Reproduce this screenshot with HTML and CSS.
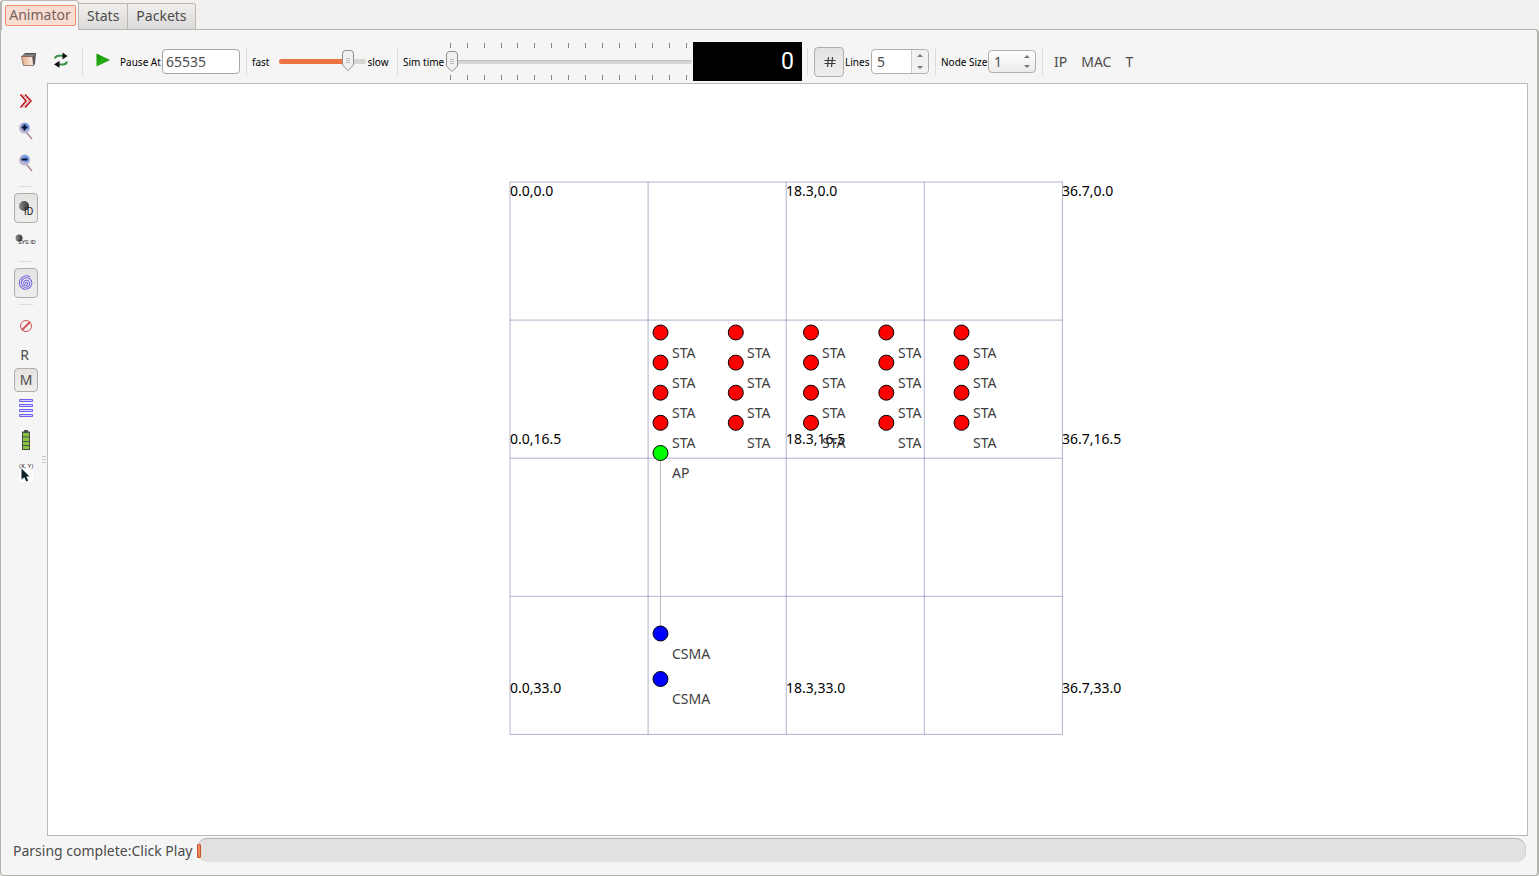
FILE: index.html
```html
<!DOCTYPE html>
<html lang="en">
<head>
<meta charset="utf-8">
<title>Animator</title>
<link rel="stylesheet" href="styles.css">
</head>
<body>
<nav class="tabs" role="tablist">
  <button class="tab tab-active" role="tab" aria-selected="true"><span>Animator</span></button>
  <button class="tab" role="tab">Stats</button>
  <button class="tab" role="tab">Packets</button>
</nav>
<main class="panel">
  <div class="toolbar">
    <div class="group group-file">
      <button class="tool" aria-label="Open">
        <svg width="16" height="16" viewBox="0 0 16 16"><defs><linearGradient id="fold" x2="1"><stop stop-color="#e8ab86"/><stop offset="1" stop-color="#fbeee4"/></linearGradient></defs><path d="M1 4l3-3h11l-1 11-2 2z" fill="#55555a"/><path d="M2 2.500h12l-2 2H1z" fill="#8b8c92"/><path d="M.5 4.500h11l1 9H2.500z" fill="url(#fold)" stroke="#70554a" stroke-width=".7"/></svg>
      </button>
      <button class="tool" aria-label="Reload">
        <svg width="16" height="16" viewBox="0 0 16 16" fill="none"><path d="M2 6.500Q2.500 4 6 3.800H11" stroke="#369347" stroke-width="2"/><path d="M9.500.5L14.500 4 9.500 7.500z" fill="#111"/><path d="M14 9.500q-.5 2.800-4 2.900H6" stroke="#369347" stroke-width="2"/><path d="M6.500 8.800L1 12.400l5.500 3.300z" fill="#111"/></svg>
      </button>
    </div>
    <div class="group group-play">
      <button class="tool tool-play" aria-label="Play">
        <svg width="14" height="14" viewBox="0 0 14 14"><defs><linearGradient id="play" x2="1" y2="1"><stop stop-color="#0a8a08"/><stop offset=".5" stop-color="#27ae12"/><stop offset="1" stop-color="#087506"/></linearGradient></defs><path d="M.5.5L14 7 .5 13.500z" fill="url(#play)"/></svg>
      </button>
      <label class="small" for="pause">Pause At</label>
      <input class="field" id="pause" type="text" value="65535">
    </div>
    <div class="group group-speed">
      <label class="small" for="speed">fast</label>
      <input class="slider slider-speed" id="speed" type="range" min="0" max="100" value="84">
      <span class="small">slow</span>
    </div>
    <div class="group group-time">
      <label class="small" for="time">Sim time</label>
      <div class="timeline">
        <svg class="ticks" width="237" height="5" viewBox="0 0 237 5"><path id="ticks" d="M.5 0v5M17.500 0v5M34.500 0v5M51.500 0v5M67.500 0v5M84.500 0v5M101.500 0v5M118.500 0v5M135.500 0v5M152.500 0v5M169.500 0v5M185.500 0v5M202.500 0v5M219.500 0v5M236.500 0v5" stroke="#858585"/></svg>
        <input class="slider slider-time" id="time" type="range" min="0" max="100" value="0">
        <svg class="ticks" width="237" height="5" viewBox="0 0 237 5"><use href="#ticks"/></svg>
      </div>
      <output class="lcd" for="time">0</output>
    </div>
    <div class="group group-grid">
      <button class="tool-grid" aria-label="Grid" aria-pressed="true">
        <svg width="12" height="12" viewBox="0 0 12 12" stroke="#3c3c3c" stroke-width="1.200"><path d="M4.500 1L3.500 11M8.500 1L7.500 11M.5 4.500h11M.5 7.500h11"/></svg>
      </button>
      <label class="small" for="lines">Lines</label>
      <div class="spin spin-lines">
        <input id="lines" type="number" value="5">
        <div class="steps"><button aria-label="More lines"><i class="up"></i></button><button aria-label="Fewer lines"><i class="down"></i></button></div>
      </div>
    </div>
    <div class="group group-size">
      <label class="small" for="size">Node Size</label>
      <div class="spin spin-size">
        <input id="size" type="number" value="1">
        <div class="steps"><button aria-label="Larger"><i class="up"></i></button><button aria-label="Smaller"><i class="down"></i></button></div>
      </div>
    </div>
    <div class="group group-show">
      <button class="word">IP</button>
      <button class="word">MAC</button>
      <button class="word">T</button>
    </div>
  </div>
  <div class="work">
    <aside class="rail">
      <button class="rail-item" aria-label="More tools"><svg width="14" height="14" viewBox="0 0 14 14" fill="none" stroke="#bd1115" stroke-width="1.500"><path d="M1.500.5L7 7l-5.500 6.500M6 .5L12 7l-6 6.500"/><path d="M3.500.5L9.500 7l-5.500 6.500" stroke="#d98080" stroke-width=".8"/></svg></button>
      <button class="rail-item" aria-label="Zoom in"><svg width="16" height="18" viewBox="0 0 16 18"><defs><radialGradient id="lens" cx=".6" cy=".35"><stop stop-color="#4f84e0"/><stop offset=".6" stop-color="#86a5e2"/><stop offset="1" stop-color="#c3b6d3"/></radialGradient></defs><path d="M8.500 10.500L14 17" stroke="#a88a98" stroke-width="1.500"/><circle cx="6.500" cy="6" r="5.500" fill="url(#lens)"/><path d="M3.500 5.500h6M6.500 2.500v6" stroke="#071331" stroke-width="2"/></svg></button>
      <button class="rail-item rail-tall" aria-label="Zoom out"><svg width="16" height="18" viewBox="0 0 16 18"><path d="M8.500 10.500L14 17" stroke="#a88a98" stroke-width="1.500"/><circle cx="6.500" cy="6" r="5.500" fill="url(#lens)"/><path d="M3.500 5.500h6" stroke="#071331" stroke-width="2"/></svg></button>
      <hr>
      <button class="rail-item pressed" aria-label="Node ID" aria-pressed="true"><svg width="16" height="16" viewBox="0 0 16 16"><defs><linearGradient id="ball"><stop stop-color="#8c8c8c"/><stop offset="1" stop-color="#333"/></linearGradient></defs><circle cx="6" cy="6" r="5" fill="url(#ball)"/><text class="tag" x="6" y="15">ID</text></svg></button>
      <button class="rail-item rail-mid" aria-label="System ID"><svg width="22" height="16" viewBox="0 0 22 16"><circle cx="4" cy="7" r="3.500" fill="url(#ball)"/><text class="tag tag-small" x="3" y="13">SYS ID</text></svg></button>
      <hr>
      <button class="rail-item pressed" aria-label="Wireless circles" aria-pressed="true"><svg width="16" height="16" viewBox="0 0 16 16" fill="none" stroke="#7769e3" stroke-width="1.100"><path d="M8 8.500c-1-1 1-2 1.500-.3.500 2-2.500 3-3.500 1C5 6.500 7 5 9 5.300c3 .7 3.300 4.200 1.500 6-2.500 2-6.500.7-7-2.600C3 5 6 2.500 9 2.800c4 .5 5.500 4 4.500 7-1.200 4-5.500 5.500-9 3.700C1 11.500.5 7 2.500 4 4.500.8 9-.2 12 2"/></svg></button>
      <hr>
      <button class="rail-item" aria-label="Block packets"><svg width="14" height="14" viewBox="0 0 14 14" fill="none" stroke="#cf5353"><circle cx="7" cy="7" r="5.500"/><path d="M3 11l8-8" stroke-width="2"/></svg></button>
      <button class="rail-item rail-r">R</button>
      <button class="rail-item rail-m pressed" aria-pressed="true">M</button>
      <button class="rail-item rail-mid" aria-label="Packet list"><svg width="14" height="18" viewBox="0 0 14 18" fill="#d6d2fb" stroke="#6f61ef"><path d="M.5.5h13v2H.5zM.5 5.500h13v2H.5zM.5 10.500h13v2H.5zM.5 15.500h13v2H.5z"/></svg></button>
      <button class="rail-item rail-mid" aria-label="Battery"><svg width="10" height="20" viewBox="0 0 10 20"><path d="M3 0h4v2H3zM1 1.500h8V20H1z" fill="#4a5050"/><path d="M2 3h6v3.500H2zM2 7.500h6V11H2zM2 12h6v3H2zM2 16h6v3H2z" fill="#88c43b"/></svg></button>
      <button class="rail-item rail-mid" aria-label="Show coordinates"><svg width="18" height="22" viewBox="0 0 18 22"><path d="M2 4h14v17H2z" fill="#fff"/><text class="tag tag-small" x="2" y="7">(X, Y)</text><path d="M4.500 7.500v11l2.800-2.300 1.900 4.300 2-1-2-4h3.300z" fill="#0b2027"/></svg></button>
    </aside>
    <div class="grip"><i></i><i></i><i></i></div>
    <section class="canvas">
      <svg class="scene" width="555" height="555" viewBox="0 0 555 555">
        <defs>
          <g id="row"><circle cx="150.500" cy="0" r="7.500"/><circle cx="225.800" cy="0" r="7.500"/><circle cx="301" cy="0" r="7.500"/><circle cx="376.300" cy="0" r="7.500"/><circle cx="451.500" cy="0" r="7.500"/></g>
        </defs>
        <path class="mesh" d="M0 0h552.500M0 138.100h552.500M0 276.200h552.500M0 414.300h552.500M0 552.400h552.500M0 0v552.500M138.100 0v552.500M276.200 0v552.500M414.300 0v552.500M552.400 0v552.500"/>
        <path class="link" d="M150.500 271v180"/>
        <g class="sta"><use href="#row" y="150.500"/><use href="#row" y="180.600"/><use href="#row" y="210.700"/><use href="#row" y="240.800"/></g>
        <circle class="ap" cx="150.500" cy="271" r="7.500"/>
        <circle class="csma" cx="150.500" cy="451.500" r="7.500"/>
        <circle class="csma" cx="150.500" cy="497" r="7.500"/>
        <g class="names">
          <text x="162" y="176">STA</text><text x="237" y="176">STA</text><text x="312" y="176">STA</text><text x="388" y="176">STA</text><text x="463" y="176">STA</text>
          <text x="162" y="206">STA</text><text x="237" y="206">STA</text><text x="312" y="206">STA</text><text x="388" y="206">STA</text><text x="463" y="206">STA</text>
          <text x="162" y="236">STA</text><text x="237" y="236">STA</text><text x="312" y="236">STA</text><text x="388" y="236">STA</text><text x="463" y="236">STA</text>
          <text x="162" y="266">STA</text><text x="237" y="266">STA</text><text x="312" y="266">STA</text><text x="388" y="266">STA</text><text x="463" y="266">STA</text>
          <text x="162" y="296">AP</text><text x="162" y="477">CSMA</text><text x="162" y="522">CSMA</text>
        </g>
        <g class="coords">
          <text x="0" y="14">0.0,0.0</text><text x="276" y="14">18.3,0.0</text><text x="552" y="14">36.7,0.0</text>
          <text x="0" y="262">0.0,16.5</text><text x="276" y="262">18.3,16.5</text><text x="552" y="262">36.7,16.5</text>
          <text x="0" y="511">0.0,33.0</text><text x="276" y="511">18.3,33.0</text><text x="552" y="511">36.7,33.0</text>
        </g>
      </svg>
    </section>
  </div>
  <footer class="status">
    <span class="message">Parsing complete:Click Play</span>
    <div class="progress" role="progressbar" aria-label="Parsing" aria-valuenow="0"><div class="progress-fill"></div></div>
  </footer>
</main>
</body>
</html>
```
FILE: styles.css
```css
* { box-sizing: border-box; }
body {
  margin: 0;
  height: 100vh;
  display: flex;
  flex-direction: column;
  background: #f2f1f0;
  color: #4c4c4c;
  font: 14px/20px "Noto Sans", "Open Sans", sans-serif;
}
button, input { font: inherit; color: inherit; margin: 0; padding: 0; }
button { border: 0; background: none; display: flex; align-items: center; justify-content: center; }
svg { display: block; flex: none; }

.tabs { display: flex; align-items: flex-end; height: 30px; flex: none; }
.tab {
  height: 27px;
  padding: 0 8px 2px;
  border: 1px solid #bbb7b3;
  border-left: 0;
  background: linear-gradient(#f0efee, #dcdad8);
}
.tab:last-child { border-radius: 0 3px 0 0; }
.tab-active {
  height: 30px;
  width: 79px;
  padding: 0 0 1px;
  border-left: 2px solid #b5b1ac;
  border-bottom: 0;
  border-radius: 4px 4px 0 0;
  background: #f5f5f5;
  position: relative;
  z-index: 1;
}
.tab-active span {
  width: 71px;
  height: 21px;
  line-height: 18px;
  border: 1px solid #f0906c;
  border-radius: 2px;
  background: #f8ddd2;
  color: #75605a;
}

.panel {
  flex: 1;
  min-height: 0;
  margin-top: -1px;
  display: flex;
  flex-direction: column;
  background: #f5f5f5;
  border: 1px solid #b5b3ae;
  border-right-width: 2px;
  border-bottom-width: 1px;
  border-radius: 0 4px 4px 4px;
}

.toolbar { display: flex; align-items: flex-end; height: 53px; flex: none; padding: 0 0 2px 12px; }
.group { display: flex; align-items: center; height: 39px; position: relative; }
.group + .group { padding-left: 6px; }
.group + .group::before { content: ""; position: absolute; left: 0; top: 6px; height: 27px; border-left: 1px solid #dcdbda; }
.small { font-size: 10px; color: #000; white-space: nowrap; }
.group-file { width: 69px; gap: 16px; padding: 0 0 4px 8px; }
.group-play { width: 164px; }
.tool-play { margin: 0 10px 4px 8px; }
.field {
  width: 78px;
  height: 25px;
  margin-left: auto;
  margin-right: 6px;
  padding: 0 3px;
  border: 1px solid #aaa6a2;
  border-radius: 4px;
  background: #fff;
}
.group-speed { width: 151px; }
.group-time { width: 410px; }
.group-grid { width: 128px; }
.group-size { width: 107px; }

.slider { appearance: none; background: none; height: 22px; display: block; }
.slider::-webkit-slider-runnable-track { height: 4px; border-radius: 2px; background: linear-gradient(#bfbcb9 1px, #d8d6d4 1px); }
.slider::-webkit-slider-thumb {
  appearance: none;
  width: 12px;
  height: 21px;
  margin-top: -9px;
  background: url("data:image/svg+xml,%3Csvg xmlns='http://www.w3.org/2000/svg' width='12' height='21'%3E%3Cpath d='M3 .5h6Q11.500 1 11.500 4v11L6 20.500.5 15V4Q.5 1 3 .5z' fill='%23f2f1ef' stroke='%23918e8b'/%3E%3Cpath d='M4 8.500h4M4 10.500h4M4 12.500h4' stroke='%23bbb'/%3E%3C/svg%3E");
}
.slider-speed { width: 87px; margin: 0 1px 0 10px; }
.slider-speed::-webkit-slider-runnable-track { height: 5px; background: linear-gradient(90deg, #ed7442 78%, #d8d6d4 78%); }
.timeline { width: 246px; margin-left: auto; display: flex; flex-direction: column; justify-content: space-between; height: 37px; }
.slider-time { width: 246px; }
.ticks { margin-left: 4px; }
.lcd {
  width: 109px;
  height: 39px;
  margin: 0 5px 0 1px;
  padding-right: 8px;
  background: #000;
  color: #fff;
  text-align: right;
  font: 23px/39px Roboto, sans-serif;
}
.pressed, .tool-grid { border: 1px solid #b0aca8; border-radius: 4px; background: linear-gradient(#e5e3e1, #efeeed); }
.tool-grid { width: 30px; height: 30px; margin: 0 1px; padding-left: 2px; }
.spin { display: flex; margin-left: auto; border: 1px solid #b3afab; border-radius: 4px; background: #fff; }
.spin input { border: 0; background: none; min-width: 0; flex: 1; padding-left: 5px; appearance: textfield; outline: 0; }
.spin input::-webkit-inner-spin-button { appearance: none; }
.steps { width: 17px; display: flex; flex-direction: column; }
.steps button { flex: 1; }
.up, .down { border: 3px solid transparent; }
.up { border-top: 0; border-bottom: 3px solid #777; }
.down { border-bottom: 0; border-top: 3px solid #777; }
.spin-lines { width: 58px; height: 25px; margin-right: 6px; }
.spin-lines .steps { border-left: 1px solid #cfccc9; background: #f3f2f1; border-radius: 0 4px 4px 0; }
.spin-size { width: 48px; height: 23px; margin-right: 6px; background: linear-gradient(#fff, #ecebea); }
.group-show { gap: 14px; }
.group + .group-show { padding-left: 12px; }

.work { flex: 1; min-height: 0; display: flex; }
.rail { width: 37px; flex: none; padding: 3px 0 0 13px; }
.rail-item { width: 24px; height: 30px; }
.rail-tall { height: 34px; }
.rail-mid { height: 32px; }
.rail-r { width: 21px; height: 27px; }
.rail-m { height: 24px; }
.rail hr { width: 14px; height: 1px; margin: 6px 5px; border: 0; background: #dcdbda; }
.tag { font: 10px Roboto, sans-serif; fill: #222; }
.tag-small { font-size: 6px; }
.grip { width: 9px; flex: none; padding: 0 3px 0 4px; display: flex; flex-direction: column; justify-content: center; gap: 2px; }
.grip i { width: 4px; height: 1px; background: #c8c5c2; }
.canvas {
  flex: 1;
  min-width: 0;
  margin-right: 9px;
  border: 1px solid #bbb;
  background: #fff;
  display: flex;
  align-items: center;
  justify-content: center;
}
.scene { overflow: visible; }
.mesh { fill: none; stroke: rgba(0, 0, 100, .3); stroke-width: 1; }
.link { stroke: #bbb; }
.sta { fill: #f00; stroke: #000; }
.ap { fill: #0f0; stroke: #000; }
.csma { fill: #00f; stroke: #000; }
.names { fill: #404040; }
.coords { fill: #000; }

.status { display: flex; height: 39px; flex: none; padding: 2px 11px 0 12px; gap: 2px; }
.message { width: 182px; height: 26px; line-height: 26px; white-space: nowrap; }
.progress { flex: 1; height: 24px; padding: 5px 0; border-radius: 10px; background: #e3e1df; border-top: 1px solid #b5b3b0; border-right: 1px solid #ccc; }
.progress-fill { width: 4px; height: 14px; border: 1px solid #c9532b; border-radius: 1px; background: #f08763; }
```
